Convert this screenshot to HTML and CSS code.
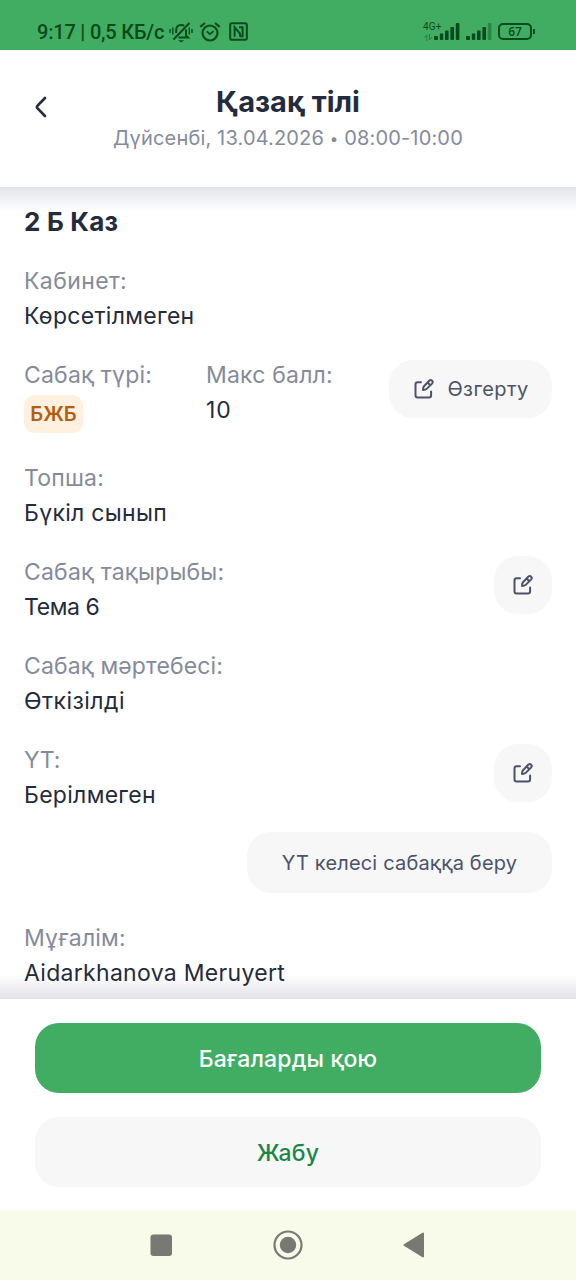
FILE: index.html
```html
<!DOCTYPE html>
<html lang="kk">
<head>
<meta charset="utf-8">
<title>Қазақ тілі</title>
<link rel="stylesheet" href="styles.css">
</head>
<body>
<svg class="defs" width="0" height="0" aria-hidden="true">
  <symbol id="edit" viewBox="0 0 20 20">
    <path d="M7 3.200H3.700C2.200 3.200 1.500 4 1.500 5.400V16.200C1.500 17.700 2.200 18.400 3.700 18.400H14.900C16.400 18.400 17.100 17.700 17.100 16.200V12.600"/>
    <path d="M15.200 1.800C16.200.9 17.300.9 18.100 1.700C18.900 2.500 18.900 3.600 18 4.600L12.700 9.900C11.800 10.800 10.600 11 9 11C9 9.400 9.200 8.200 10 7.200ZM14.200 4L15.800 5.700"/>
  </symbol>
</svg>
<div class="screen">
  <div class="status">
    <span class="clock">9:17 | 0,5 КБ/с</span>
    <svg class="bell" width="24" height="22" viewBox="0 0 24 22" fill="none" stroke="#0b4a1c" stroke-width="2">
      <path d="M7.200 12V9C7.200 5.800 9.200 4 12.200 4c1.200 0 2.200.3 3 .9M17 8.500V14.500l2 2H9.500M4.500 18.500L20.500 2"/>
      <path d="M9.200 19.200h6l-3 2.300z" fill="#0b4a1c" stroke="none"/>
      <path d="M1 8v4M3.800 6.500v7M20.300 6.500v7M23 8v4" stroke-width="1.400"/>
    </svg>
    <svg class="alarm" width="22" height="20" viewBox="0 0 22 20" fill="none" stroke="#0b4a1c" stroke-width="2.200">
      <circle cx="11" cy="11" r="7.500"/><path d="M1.300 4.800L6 1M20.700 4.800L16 1"/><path d="M7.800 9.300l3 2.800 3.800-3" stroke-width="1.800"/>
    </svg>
    <svg class="nfc" width="19" height="19" viewBox="0 0 19 19" fill="none" stroke="#0b4a1c" stroke-width="2">
      <rect x="1.200" y="1.200" width="16.600" height="16.600" rx="1.500"/>
      <path d="M5.600 14.800V5.200l5.400 6.500V14.300M10 5.200h3.600v9H10.500"/>
    </svg>
    <span class="net"><span class="net-type">4G+</span>
      <svg class="updown" width="9" height="7" viewBox="0 0 9 7" fill="none" stroke="#2c7c40" stroke-width="1"><path d="M2.800 7V1L.5 3.500M5.500 0v6l2.500-3"/></svg>
    </span>
    <svg class="bars" width="26" height="17" viewBox="0 0 26 17" fill="#0b4a1c">
      <rect y="13" width="4" height="4" rx="1"/><rect x="5.800" y="10.500" width="3.500" height="6.500" rx="1"/><rect x="11" y="7.500" width="3.600" height="9.500" rx="1"/><rect x="16.400" y="4" width="3.600" height="13" rx="1"/><rect x="21.800" width="3.600" height="17" rx="1"/>
    </svg>
    <svg class="bars bars-second" width="26" height="17" viewBox="0 0 26 17" fill="#0b4a1c">
      <rect y="13" width="4" height="4" rx="1"/><rect x="5.800" y="10.500" width="3.500" height="6.500" rx="1"/><rect x="11" y="7.500" width="3.600" height="9.500" rx="1"/><rect x="16.400" y="4" width="3.600" height="13" rx="1"/><rect x="21.800" width="3.600" height="17" rx="1" opacity=".4"/>
    </svg>
    <span class="battery">67</span><span class="battery-tip"></span>
  </div>

  <header class="header">
    <svg class="back" width="14" height="24" viewBox="0 0 14 24" fill="none" stroke="#242b3c" stroke-width="2.700" stroke-linecap="round" stroke-linejoin="round"><path d="M11 3L3.600 10.600Q2.300 12 3.600 13.400L11 21"/></svg>
    <h1 class="title">Қазақ тілі</h1>
    <p class="subtitle">Дүйсенбі, 13.04.2026 <span class="dot">•</span> 08:00-10:00</p>
  </header>

  <main class="content">
    <h2 class="group">2 Б Каз</h2>
    <section class="field"><div><p class="label t-room">Кабинет:</p><p class="value">Көрсетілмеген</p></div></section>
    <section class="field field-type">
      <div class="type"><p class="label">Сабақ түрі:</p><span class="badge">БЖБ</span></div>
      <div class="score"><p class="label">Макс балл:</p><p class="value t-score">10</p></div>
      <button class="soft change"><svg class="edit" width="20" height="20"><use href="#edit"/></svg><span>Өзгерту</span></button>
    </section>
    <section class="field"><div><p class="label">Топша:</p><p class="value">Бүкіл сынып</p></div></section>
    <section class="field"><div><p class="label">Сабақ тақырыбы:</p><p class="value t-theme">Тема 6</p></div>
      <button class="soft square" aria-label="Өзгерту"><svg class="edit" width="20" height="20"><use href="#edit"/></svg></button></section>
    <section class="field"><div><p class="label t-status">Сабақ мәртебесі:</p><p class="value t-done">Өткізілді</p></div></section>
    <section class="field field-home"><div><p class="label t-home">ҮТ:</p><p class="value">Берілмеген</p></div>
      <button class="soft square" aria-label="Өзгерту"><svg class="edit" width="20" height="20"><use href="#edit"/></svg></button></section>
    <button class="soft next"><span>ҮТ келесі сабаққа беру</span></button>
    <section class="field"><div><p class="label">Мұғалім:</p><p class="value">Aidarkhanova Meruyert</p></div></section>
  </main>

  <footer class="actions">
    <button class="action primary"><span>Бағаларды қою</span></button>
    <button class="action secondary"><span>Жабу</span></button>
  </footer>

  <nav class="nav">
    <svg width="22" height="22" viewBox="0 0 22 22" fill="#777972"><rect x=".5" y=".5" width="21.500" height="21.500" rx="3"/></svg>
    <svg width="30" height="30" viewBox="0 0 30 30"><circle cx="15" cy="15" r="13.500" fill="none" stroke="#777972" stroke-width="2.200"/><circle cx="15" cy="15" r="8.200" fill="#777972"/></svg>
    <svg width="22" height="26" viewBox="0 0 22 26"><path d="M1.500 13L20 1.500v23z" fill="#777972" stroke="#777972" stroke-width="2" stroke-linejoin="round"/></svg>
  </nav>
</div>
</body>
</html>
```
FILE: styles.css
```css
* { box-sizing: border-box; }
body { margin: 0; background: #fff; font-family: Inter, "Liberation Sans", sans-serif; color: #242b3c; }
h1, h2, p { margin: 0; }
button { border: 0; padding: 0; font: inherit; color: inherit; }
.defs { display: none; }
.screen { display: flex; flex-direction: column; height: 1280px; overflow: hidden; }

.status { flex: none; display: flex; align-items: flex-start; height: 50px; padding: 20px 0 0 37px; background: #41ad62; color: #0b4a1c; white-space: nowrap; }
.clock { width: 132px; font: 500 20px/24px Roboto, sans-serif; letter-spacing: -.2px; }
.bell { margin-top: 1px; }
.alarm { margin: 2px 0 0 6px; }
.nfc { margin: 2px 0 0 8px; }
.net { display: flex; flex-direction: column; width: 19px; height: 22px; margin-left: 175px; }
.net-type { font: 400 10px/13px Roboto, sans-serif; letter-spacing: .2px; }
.updown { margin: 1px 0 0 1px; }
.bars { margin: 3px 0 0 -8px; }
.bars-second { margin-left: 6px; }
.battery { width: 34px; height: 17px; margin: 3px 0 0 6px; border: 2px solid #0b4a1c; border-radius: 5px; font: 600 12px/13px "Open Sans", sans-serif; text-align: center; }
.battery-tip { width: 2px; height: 5px; margin: 9px 0 0 1px; background: #0b4a1c; }

.header { flex: none; position: relative; height: 137px; padding-top: 33px; text-align: center; }
.back { position: absolute; left: 34px; top: 45px; }
.title { font-size: 29px; line-height: 38px; font-weight: 700; }
.subtitle { font-size: 20px; line-height: 34px; color: #858b9b; letter-spacing: .16px; }
.dot { font-size: 15px; line-height: 1; vertical-align: 1px; }

.content { flex: none; display: flex; flex-direction: column; height: 812px; padding: 16px 24px 0; overflow: hidden;
  background: linear-gradient(#e3e4e9, rgba(255,255,255,0)) top / 100% 24px no-repeat, linear-gradient(rgba(255,255,255,0), #e2e2e8) bottom / 100% 24px no-repeat; }
.group { flex: none; height: 61px; font-size: 26px; line-height: 38px; font-weight: 700; letter-spacing: .2px; }
.field { flex: none; display: flex; justify-content: space-between; margin-bottom: 24px; white-space: nowrap; }
.label, .value { font-size: 23px; line-height: 35px; }
.label { color: #858b9b; letter-spacing: .2px; }
.value { letter-spacing: .3px; }
.t-room { letter-spacing: .4px; }
.t-status { letter-spacing: .13px; }
.t-done { letter-spacing: .45px; }
.t-theme { letter-spacing: -.4px; }
.t-home { letter-spacing: -.2px; }
.t-score { letter-spacing: 1px; }
.field-type { height: 79px; }
.type { width: 182px; }
.score { flex: 1; }
.badge { display: block; width: 59px; height: 38px; margin-top: 2px; border-radius: 11px; background: #fff0e0; color: #b2600f; font-size: 20px; line-height: 38px; font-weight: 600; text-align: center; }
.soft { display: flex; align-items: center; justify-content: center; background: #f7f7f8; color: #4c5368; border-radius: 24px; }
.edit { fill: none; stroke: #4c5368; stroke-width: 2; stroke-linecap: round; stroke-linejoin: round; }
.change { gap: 13px; width: 163px; height: 58px; margin-top: 2px; padding-left: 2px; font-size: 20px; letter-spacing: .4px; }
.square { width: 58px; height: 58px; margin-top: 1px; }
.field-home { margin-bottom: 19px; }
.next { align-self: flex-end; flex: none; width: 305px; height: 61px; margin-bottom: 28px; font-size: 20px; letter-spacing: .18px; }

.actions { flex: none; display: flex; flex-direction: column; gap: 24px; height: 211px; padding: 24px 35px 0; }
.action { height: 70px; padding-top: 2px; border-radius: 24px; font-size: 23px; font-weight: 500; letter-spacing: .15px; }
.primary { background: #41ad62; color: #fff; }
.secondary { background: #f7f7f7; color: #1b8747; }

.nav { flex: none; display: flex; align-items: center; justify-content: space-between; height: 70px; padding: 0 151px 0 150px; background: #f8faea; }
```
